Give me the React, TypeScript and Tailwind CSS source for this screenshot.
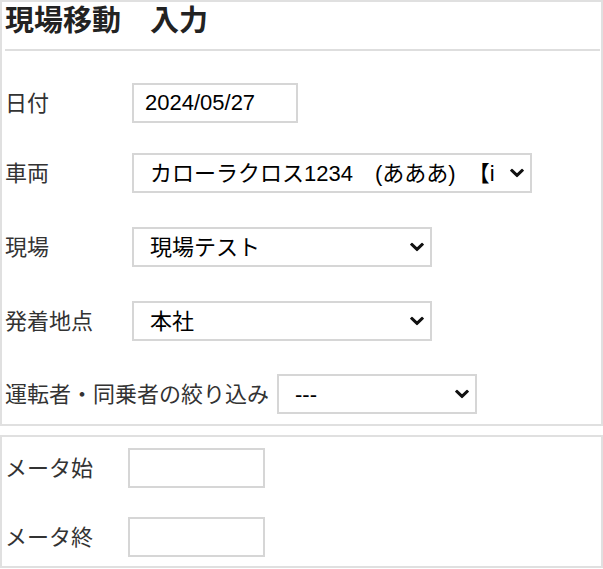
import { ChangeEvent, useState } from 'react';

const font = 'font-["Liberation_Sans","Noto_Sans_CJK_JP",sans-serif]';

function Chevron() {
  return (
    <svg width="14" height="9" viewBox="0 0 14 9" className="pointer-events-none absolute right-[8px] top-1/2 -translate-y-1/2">
      <path d="M2 2 L7 6.8 L12 2" fill="none" stroke="#111" strokeWidth="3" strokeLinecap="square" />
    </svg>
  );
}

function Select({ width, value, options }: { width: string; value: string; options: string[] }) {
  const [v, setV] = useState(value);
  return (
    <div className={`relative ${width} h-[40px]`}>
      <select
        value={v}
        onChange={(e: ChangeEvent<HTMLSelectElement>) => setV(e.target.value)}
        className="w-full h-full appearance-none bg-white border-2 border-[#d6d6d6] pl-[16px] pr-[36px] text-[22px] text-black outline-none"
      >
        {options.map((o) => (
          <option key={o} value={o}>{o}</option>
        ))}
      </select>
      <Chevron />
    </div>
  );
}

function Row({ label, labelWidth, className, children }: { label: string; labelWidth: string; className: string; children: React.ReactNode }) {
  return (
    <div className={`flex items-center h-[40px] ${className}`}>
      <span className={`${labelWidth} shrink-0 text-[22px] text-[#333] whitespace-nowrap`}>{label}</span>
      {children}
    </div>
  );
}

const car = 'カローラクロス1234　(あああ)\u00a0\u00a0【iiii】';

export default function App() {
  const [date, setDate] = useState('2024/05/27');
  const [meterStart, setMeterStart] = useState('');
  const [meterEnd, setMeterEnd] = useState('');

  return (
    <div className={`w-[603px] h-[569px] bg-white ${font}`}>
      <div className="w-[603px] border-2 border-[#e0e0e0] pl-[3px] pr-[1px] pb-[10px]">
        <h1 className="h-[38px] leading-[38px] text-[29px] font-bold text-[#222] whitespace-pre">現場移動　入力</h1>
        <div className="mt-[9px] h-[2px] bg-[#dedede]" />

        <Row label="日付" labelWidth="w-[127px]" className="mt-[32px]">
          <input
            value={date}
            onChange={(e) => setDate(e.target.value)}
            className="w-[166px] h-[40px] border-2 border-[#d6d6d6] px-[11px] text-[22px] text-black outline-none"
          />
        </Row>

        <Row label="車両" labelWidth="w-[127px]" className="mt-[30px]">
          <Select width="w-[400px]" value={car} options={[car]} />
        </Row>

        <Row label="現場" labelWidth="w-[127px]" className="mt-[34px]">
          <Select width="w-[300px]" value="現場テスト" options={['現場テスト']} />
        </Row>

        <Row label="発着地点" labelWidth="w-[127px]" className="mt-[34px]">
          <Select width="w-[300px]" value="本社" options={['本社']} />
        </Row>

        <Row label="運転者・同乗者の絞り込み" labelWidth="w-[272px]" className="mt-[33px]">
          <Select width="w-[200px]" value="---" options={['---']} />
        </Row>
      </div>

      <div className="mt-[9px] w-[603px] border-2 border-[#e0e0e0] pl-[3px] pb-[9px]">
        <Row label="メータ始" labelWidth="w-[123px]" className="mt-[11px]">
          <input
            value={meterStart}
            onChange={(e) => setMeterStart(e.target.value)}
            className="w-[137px] h-[40px] border-2 border-[#d6d6d6] px-[11px] text-[22px] outline-none"
          />
        </Row>
        <Row label="メータ終" labelWidth="w-[123px]" className="mt-[29px]">
          <input
            value={meterEnd}
            onChange={(e) => setMeterEnd(e.target.value)}
            className="w-[137px] h-[40px] border-2 border-[#d6d6d6] px-[11px] text-[22px] outline-none"
          />
        </Row>
      </div>
    </div>
  );
}
